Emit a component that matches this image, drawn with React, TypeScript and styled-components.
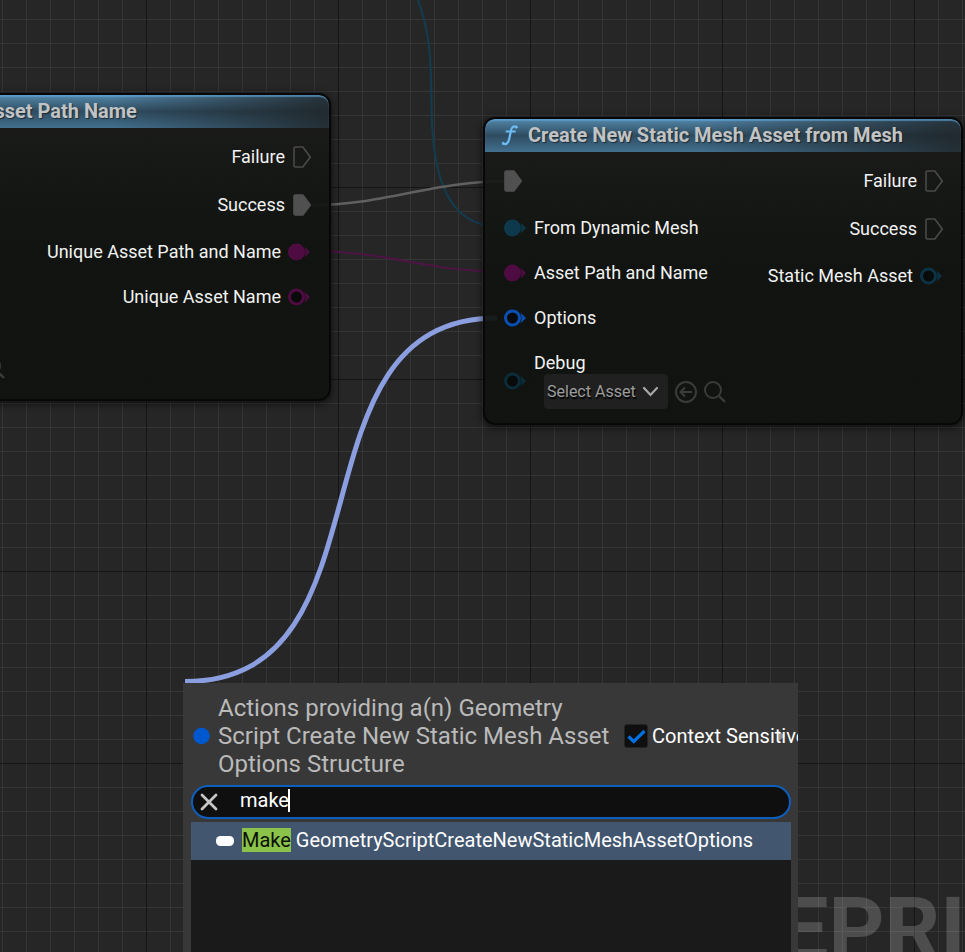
import React, { useState } from "react";
import styled, { createGlobalStyle } from "styled-components";

const GlobalStyle = createGlobalStyle`
  *, *::before, *::after { box-sizing: border-box; }
  body {
    margin: 0;
    background: #262626;
    color: #f2f2f2;
    font-family: Roboto, "Liberation Sans", sans-serif;
    font-size: 18px;
    line-height: 22px;
  }
  button, input, select { font: inherit; color: inherit; }
  svg { flex: none; }
`;

const Canvas = styled.main`
  position: relative;
  min-height: 100vh;
  overflow: hidden;
  background-color: #262626;
  background-image:
    linear-gradient(90deg, #151515 1px, transparent 1px),
    linear-gradient(#151515 1px, transparent 1px),
    linear-gradient(90deg, #353535 1px, transparent 1px),
    linear-gradient(#353535 1px, transparent 1px);
  background-size: 192px 192px, 192px 192px, 24px 24px, 24px 24px;
  background-position: 146px 0, 0 187px, 2px 0, 0 19px;
`;

const Wires = styled.svg`
  position: absolute;
  inset: 0;
  width: 100%;
  height: 100%;
  fill: none;
`;

const Watermark = styled.div`
  position: absolute;
  top: 877px;
  left: 621px;
  color: rgba(255, 255, 255, 0.18);
  font-size: 87px;
  font-weight: 700;
  line-height: 104px;
`;

const NodeCard = styled.section<{ $x: number; $y: number; $width: number }>`
  position: absolute;
  left: ${(p) => p.$x}px;
  top: ${(p) => p.$y}px;
  width: ${(p) => p.$width}px;
  border: 2px solid #070707;
  border-radius: 12px;
  overflow: hidden;
  background: linear-gradient(rgba(27, 28, 27, 0.93), rgba(15, 18, 14, 0.93) 50%);
  box-shadow: 0 2px 8px rgba(0, 0, 0, 0.7);
`;

const NodeHeader = styled.header`
  display: flex;
  align-items: center;
  gap: 8px;
  height: 33px;
  padding: 0 0 1px 15px;
  border-radius: 9px 9px 0 0;
  background:
    linear-gradient(90deg, transparent 45%, rgba(29, 33, 35, 0.8) 98%),
    linear-gradient(#5387aa, #2f4c60 50%, #42708f);
  box-shadow: inset 0 2px 1px rgba(94, 164, 214, 0.65);
`;

const NodeTitle = styled.h2`
  margin: 0;
  color: #c1c3c4;
  font-size: 20px;
  font-weight: 700;
  line-height: 24px;
  white-space: nowrap;
  text-shadow: 1px 1px 1px rgba(0, 0, 0, 0.5);
`;

const NodeBody = styled.div`
  display: flex;
  justify-content: space-between;
  padding: 5px 18px 14px 19px;
`;

const PinColumn = styled.div<{ $end?: boolean }>`
  display: flex;
  flex-direction: column;
  align-items: ${(p) => (p.$end ? "flex-end" : "flex-start")};
`;

const PinRow = styled.div<{ $exec?: boolean }>`
  display: flex;
  align-items: center;
  gap: ${(p) => (p.$exec ? 8 : 7)}px;
  height: ${(p) => (p.$exec ? 48 : 45)}px;
  white-space: nowrap;
`;

const AssetPin = styled.div`
  display: flex;
  align-items: center;
  gap: 7px;
  padding-top: 12px;
`;

const AssetField = styled.div`
  display: flex;
  flex-direction: column;
`;

const AssetControls = styled.div`
  display: flex;
  align-items: center;
  gap: 6px;
  padding-left: 10px;
`;

const SelectBox = styled.div`
  display: grid;
  align-items: center;
  width: 124px;
  height: 35px;
  border-radius: 4px;
  background: #1f201f;
  color: #9c9c9c;

  > * { grid-area: 1 / 1; }
  > svg { justify-self: end; margin-right: 9px; pointer-events: none; }
`;

const Select = styled.select`
  appearance: none;
  height: 34px;
  padding: 0 3px;
  border: 0;
  background: transparent;
  font-size: 16px;
  text-shadow: 1px 2px 1px #000;
`;

const IconButton = styled.button`
  display: grid;
  place-items: center;
  padding: 0;
  border: 0;
  background: none;
  color: #3a3c3a;
`;

const LooseBrowse = styled.div`
  display: flex;
  padding: 24px 0 20px 45px;
`;

const Menu = styled.section`
  position: absolute;
  left: 183px;
  top: 683px;
  bottom: 0;
  display: flex;
  flex-direction: column;
  width: 615px;
  padding: 11px 7px 0 8px;
  overflow: hidden;
  background: #383838;
`;

const MenuHeader = styled.header`
  display: flex;
  align-items: center;
  gap: 8px;
  padding-left: 2px;
`;

const MenuTitle = styled.h3`
  flex: 0 0 398px;
  margin: 0;
  color: #bababa;
  font-size: 24px;
  font-weight: 400;
  line-height: 28px;
`;

const ContextToggle = styled.label`
  position: relative;
  z-index: 0;
  display: flex;
  align-items: center;
  gap: 4px;
  padding-bottom: 1px;
  color: #fff;
  font-size: 20px;
  line-height: 24px;
  white-space: nowrap;
`;

const TickBox = styled.span`
  display: grid;
  flex: none;
  width: 24px;
  height: 24px;

  > * { grid-area: 1 / 1; }
  > svg { pointer-events: none; }
`;

const Tick = styled.input`
  appearance: none;
  width: 24px;
  height: 24px;
  margin: 0;
  border: 1px solid #242424;
  border-radius: 3px;
  background: #0f0f0f;
`;

const ExpandArrow = styled.svg`
  position: absolute;
  left: 154px;
  top: 7px;
  z-index: -1;
`;

const SearchBar = styled.div`
  display: flex;
  align-items: center;
  gap: 22px;
  height: 34px;
  margin-top: 7px;
  padding-left: 7px;
  border: 2px solid #0d5fbd;
  border-radius: 17px;
  background: #0f0f0f;
`;

const SearchText = styled.label`
  display: flex;
  flex: 1;
  align-items: center;
  min-width: 0;
  padding-bottom: 4px;
  cursor: text;
`;

const SearchInput = styled.input`
  field-sizing: content;
  max-width: 100%;
  height: 26px;
  padding: 0;
  border: 0;
  outline: 0;
  background: transparent;
  color: #fff;
  caret-color: transparent;
  font-size: 20px;
`;

const Caret = styled.span`
  width: 2px;
  height: 23px;
  margin-left: -1px;
  background: #fff;
`;

const Results = styled.ul`
  flex: 1;
  margin: 3px 0 0;
  padding: 0;
  background: #1a1a1a;
  list-style: none;
`;

const Result = styled.button`
  display: flex;
  align-items: center;
  gap: 8px;
  width: 100%;
  height: 38px;
  padding: 0 0 0 25px;
  border: 0;
  background: #42566f;
  color: #fff;
  font-size: 20px;
  line-height: 24px;
  text-align: left;
`;

const ResultLabel = styled.span`
  padding-bottom: 2px;
`;

const Highlight = styled.mark`
  background: #8bc34a;
  color: #0b0f06;
`;

function ExecPin({ filled }: { filled?: boolean }) {
  return (
    <svg width="18" height="22" viewBox="0 0 18 22" aria-hidden="true">
      <path
        d="M2.500 1h7.300L17.300 11 9.800 21H2.500Q1 21 1 19.500v-17Q1 1 2.500 1Z"
        fill={filled ? "#505050" : "none"}
        stroke={filled ? "#505050" : "#4a4a4a"}
        strokeWidth="1.600"
        strokeLinejoin="round"
      />
    </svg>
  );
}

function DataPin({ color, filled }: { color: string; filled?: boolean }) {
  return (
    <svg width="23" height="18" viewBox="0 0 23 18" aria-hidden="true">
      <path d="M16.500 3.500 22 9l-5.500 5.500Q18.500 9 16.500 3.500Z" fill={color} />
      <circle cx="8.500" cy="9" r="7" fill={filled ? color : "#090b0b"} stroke={color} strokeWidth="3" />
    </svg>
  );
}

function FunctionGlyph() {
  return (
    <svg width="20" height="22" viewBox="0 0 20 22" fill="none" stroke="#6cbcf5" strokeLinecap="round" aria-hidden="true">
      <path d="M16.500 3C13.500 1.500 11.700 3 11 6.500L9.300 14.500C8.500 18.800 6.500 20.800 3.200 19.800" strokeWidth="2.200" />
      <path d="M6.500 7.500h8.500" strokeWidth="1.800" />
      <circle cx="16.200" cy="3.200" r="1" fill="#6cbcf5" strokeWidth="1" />
      <circle cx="3.300" cy="19.300" r="1" fill="#6cbcf5" strokeWidth="1" />
    </svg>
  );
}

function MagnifierGlyph() {
  return (
    <svg width="22" height="22" viewBox="0 0 22 22" fill="none" stroke="#3a3c3a" strokeWidth="2" aria-hidden="true">
      <circle cx="9" cy="9" r="8" />
      <path d="M15 15l6 6" strokeWidth="2.400" />
    </svg>
  );
}

function AssetPicker({ label }: { label: string }) {
  return (
    <AssetControls>
      <SelectBox>
        <Select aria-label={label}>
          <option>Select Asset</option>
        </Select>
        <svg width="17" height="12" viewBox="0 0 17 12" fill="none" stroke="#a8a8a8" strokeWidth="2.200" aria-hidden="true">
          <path d="M2 2l6.500 7L15 2" strokeLinecap="round" />
        </svg>
      </SelectBox>
      <IconButton aria-label="Use selected asset">
        <svg width="24" height="24" viewBox="0 0 24 24" fill="none" stroke="currentColor" strokeWidth="2">
          <circle cx="12" cy="12" r="10" />
          <path d="M18 12H7M11 7.500 6.500 12l4.500 4.500" />
        </svg>
      </IconButton>
      <IconButton aria-label="Browse to asset">
        <MagnifierGlyph />
      </IconButton>
    </AssetControls>
  );
}

export default function App() {
  const [query, setQuery] = useState("make");
  const [contextual, setContextual] = useState(true);

  return (
    <>
      <GlobalStyle />
      <Canvas>
        <Watermark>BLUEPRINT</Watermark>
        <Wires aria-hidden="true">
          <path d="M418 0C440 60 425 110 437 165C445 203 463 227 505 228" stroke="#123d50" strokeWidth="2" />
          <path d="M312 205C385 205 430 181 510 181" stroke="#606060" strokeWidth="2.500" />
          <path d="M312 251C390 251 425 272 508 272" stroke="#4e1445" strokeWidth="2" />
          <path d="M185 681.500C399 681.500 283 318 497 318" stroke="#8b9edf" strokeWidth="5" />
        </Wires>

        <NodeCard $x={-64} $y={93} $width={395}>
          <NodeHeader>
            <FunctionGlyph />
            <NodeTitle>Asset Path Name</NodeTitle>
          </NodeHeader>
          <NodeBody>
            <PinColumn />
            <PinColumn $end>
              <PinRow $exec>Failure<ExecPin /></PinRow>
              <PinRow $exec>Success<ExecPin filled /></PinRow>
              <PinRow>Unique Asset Path and Name<DataPin color="#4e0c42" filled /></PinRow>
              <PinRow>Unique Asset Name<DataPin color="#4e0c42" /></PinRow>
            </PinColumn>
          </NodeBody>
          <LooseBrowse>
            <MagnifierGlyph />
          </LooseBrowse>
        </NodeCard>

        <NodeCard $x={483} $y={117} $width={480}>
          <NodeHeader>
            <FunctionGlyph />
            <NodeTitle>Create New Static Mesh Asset from Mesh</NodeTitle>
          </NodeHeader>
          <NodeBody>
            <PinColumn>
              <PinRow $exec><ExecPin filled /></PinRow>
              <PinRow><DataPin color="#0e394c" filled />From Dynamic Mesh</PinRow>
              <PinRow><DataPin color="#4e0c42" filled />Asset Path and Name</PinRow>
              <PinRow><DataPin color="#0a50b4" />Options</PinRow>
              <AssetPin>
                <DataPin color="#0b2c38" />
                <AssetField>
                  <span>Debug</span>
                  <AssetPicker label="Debug" />
                </AssetField>
              </AssetPin>
            </PinColumn>
            <PinColumn $end>
              <PinRow $exec>Failure<ExecPin /></PinRow>
              <PinRow $exec>Success<ExecPin /></PinRow>
              <PinRow>Static Mesh Asset<DataPin color="#0c3345" /></PinRow>
            </PinColumn>
          </NodeBody>
        </NodeCard>

        <Menu aria-label="Actions">
          <MenuHeader>
            <svg width="17" height="18" viewBox="0 0 17 18" aria-hidden="true">
              <circle cx="8.500" cy="9" r="8.300" fill="#0058cf" />
            </svg>
            <MenuTitle>Actions providing a(n) Geometry Script Create New Static Mesh Asset Options Structure</MenuTitle>
            <ContextToggle>
              <TickBox>
                <Tick type="checkbox" checked={contextual} onChange={(e) => setContextual(e.target.checked)} />
                {contextual && (
                  <svg width="24" height="24" viewBox="0 0 24 24" fill="none" stroke="#0070e0" strokeWidth="3.200" aria-hidden="true">
                    <path d="M4.500 12.500 9.800 17.500 20.500 7" />
                  </svg>
                )}
              </TickBox>
              Context Sensitive
              <ExpandArrow width="7" height="10" viewBox="0 0 7 10" aria-hidden="true">
                <path d="M1 0l6 5-6 5Z" fill="#8c8c8c" />
              </ExpandArrow>
            </ContextToggle>
          </MenuHeader>
          <SearchBar>
            <IconButton aria-label="Clear search" onClick={() => setQuery("")}>
              <svg width="18" height="18" viewBox="0 0 18 18" fill="none" stroke="#c6c6c6" strokeWidth="2.800" strokeLinecap="round">
                <path d="M2 2l14 14M16 2 2 16" />
              </svg>
            </IconButton>
            <SearchText>
              <SearchInput aria-label="Search actions" value={query} onChange={(e) => setQuery(e.target.value)} />
              <Caret />
            </SearchText>
          </SearchBar>
          <Results>
            <li>
              <Result>
                <svg width="18" height="10" viewBox="0 0 18 10" aria-hidden="true">
                  <rect width="18" height="10" rx="4.500" fill="#fff" />
                </svg>
                <ResultLabel><Highlight>Make</Highlight> GeometryScriptCreateNewStaticMeshAssetOptions</ResultLabel>
              </Result>
            </li>
          </Results>
        </Menu>
      </Canvas>
    </>
  );
}
